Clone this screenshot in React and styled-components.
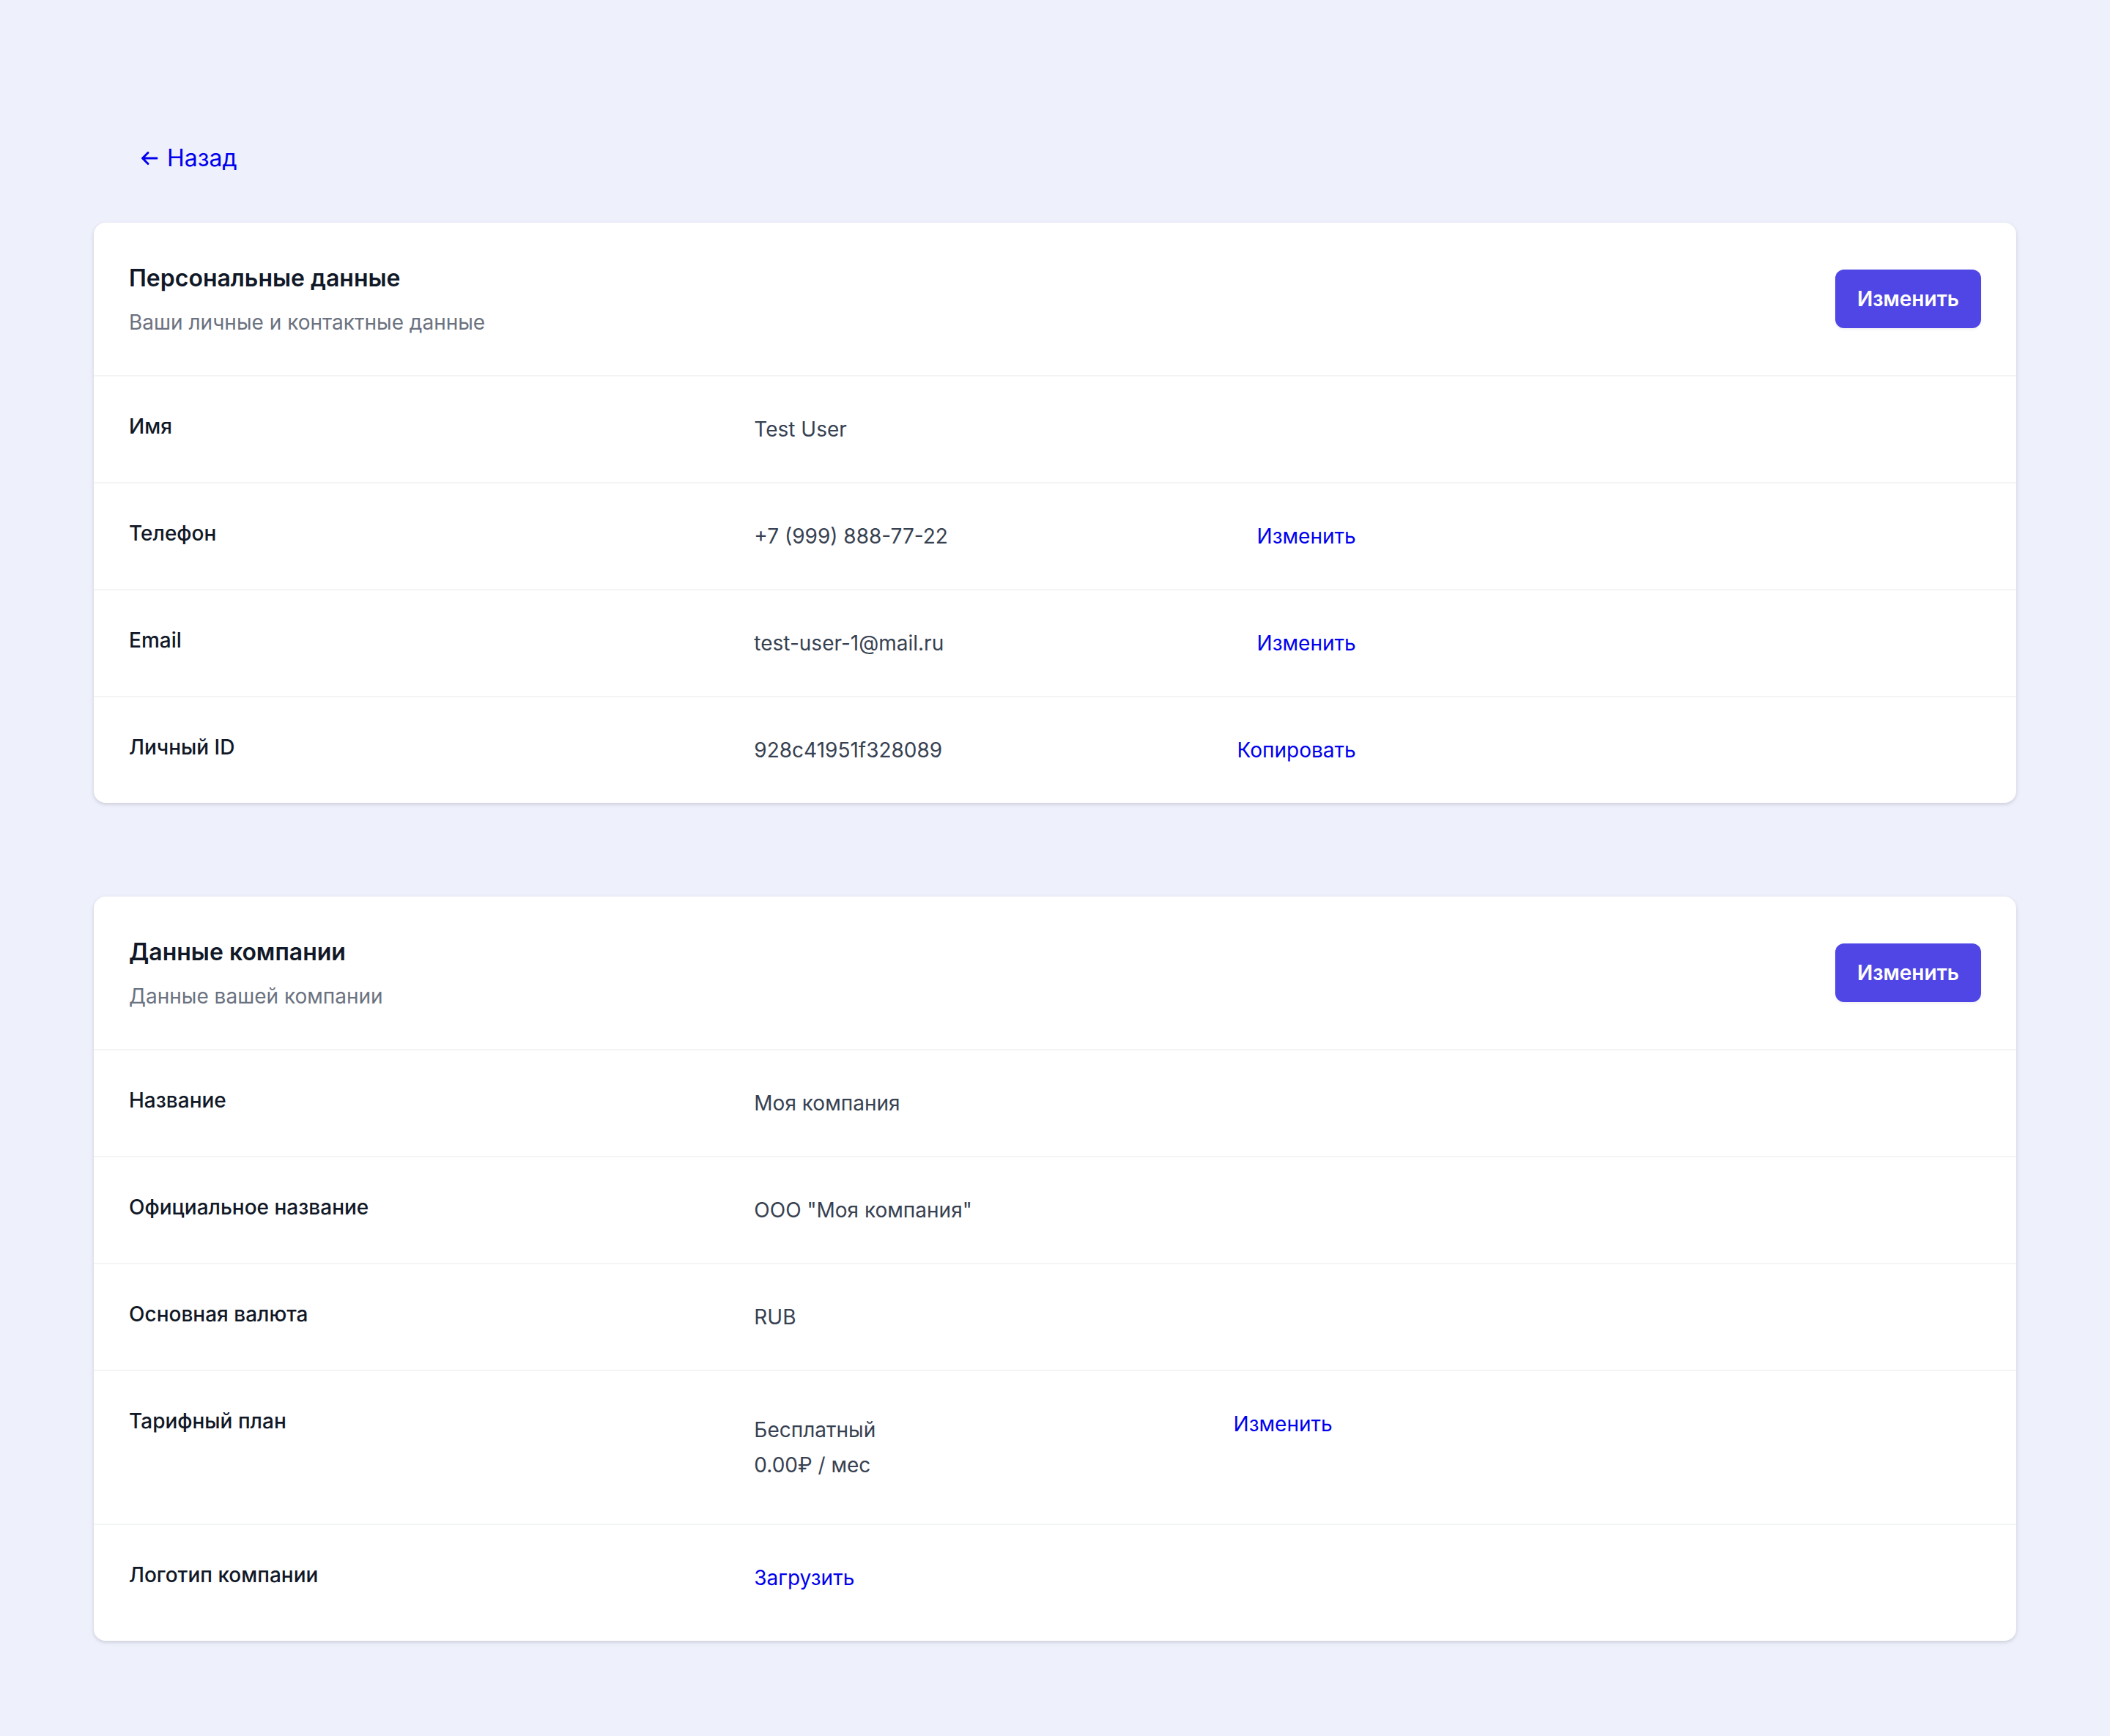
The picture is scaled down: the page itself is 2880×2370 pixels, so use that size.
import React from "react";
import styled, { createGlobalStyle } from "styled-components";

const GlobalStyle = createGlobalStyle`
  html, body {
    margin: 0;
    padding: 0;
    background: #eef0fb;
  }
  body {
    font-family: "Inter", "Liberation Sans", sans-serif;
    -webkit-font-smoothing: antialiased;
  }
  * {
    box-sizing: border-box;
  }
`;

const Page = styled.div`
  min-height: 100vh;
  padding: 192px 128px 128px;
  display: flex;
  flex-direction: column;
  gap: 128px;
  background: #eef0fb;
`;

const Top = styled.div`
  display: flex;
  flex-direction: column;
  gap: 64px;
`;

const BackLink = styled.a`
  display: inline-flex;
  align-items: center;
  gap: 12px;
  align-self: flex-start;
  margin-left: 64px;
  font-size: 32px;
  line-height: 48px;
  color: #0000ee;
  text-decoration: none;
  cursor: pointer;
`;

const Card = styled.section`
  background: #ffffff;
  border-radius: 16px;
  box-shadow: 0 2px 6px rgba(15, 23, 42, 0.1), 0 2px 4px rgba(15, 23, 42, 0.06);
  overflow: hidden;
`;

const CardHeader = styled.header`
  display: flex;
  align-items: center;
  justify-content: space-between;
  padding: 48px;
  border-bottom: 2px solid #f3f4f6;
`;

const Title = styled.h3`
  margin: 0;
  font-size: 32px;
  line-height: 56px;
  font-weight: 600;
  color: #111827;
`;

const Subtitle = styled.p`
  margin: 8px 0 0;
  font-size: 28px;
  line-height: 48px;
  color: #6b7280;
`;

const PrimaryButton = styled.button`
  border: none;
  border-radius: 12px;
  background: #4f46e5;
  color: #ffffff;
  font-family: inherit;
  font-size: 28px;
  line-height: 48px;
  font-weight: 600;
  padding: 16px 30px;
  box-shadow: 0 2px 4px rgba(0, 0, 0, 0.06);
  cursor: pointer;
`;

const Row = styled.div`
  display: grid;
  grid-template-columns: repeat(3, 1fr);
  gap: 32px;
  padding: 48px 48px ${(p) => (p.$tall ? "62px" : "48px")};
  & + & {
    border-top: 2px solid #f3f4f6;
  }
`;

const Label = styled.dt`
  margin: 0;
  font-size: 28px;
  line-height: 40px;
  font-weight: 500;
  color: #111827;
`;

const ValueCell = styled.dd`
  margin: 0;
  display: flex;
  align-items: flex-start;
  justify-content: space-between;
`;

const Value = styled.div`
  font-size: 28px;
  line-height: 48px;
  color: #374151;
  padding: ${(p) => (p.$stacked ? "8px 0" : "0")};
`;

const ActionLink = styled.a`
  font-size: 28px;
  line-height: 48px;
  color: #0000ee;
  text-decoration: none;
  cursor: pointer;
  margin-right: ${(p) => (p.$inset ? "32px" : "0")};
`;

const ArrowLeft = () => (
  <svg width="24" height="20" viewBox="0 0 24 20" fill="none">
    <path
      d="M22 10H3M10 2.5L2.5 10L10 17.5"
      stroke="#0000ee"
      strokeWidth="3"
      strokeLinecap="round"
      strokeLinejoin="round"
    />
  </svg>
);

const personal = [
  { label: "Имя", value: "Test User" },
  { label: "Телефон", value: "+7 (999) 888-77-22", action: "Изменить" },
  { label: "Email", value: "test-user-1@mail.ru", action: "Изменить" },
  { label: "Личный ID", value: "928c41951f328089", action: "Копировать" },
];

const DataCard = ({ title, subtitle, children }) => (
  <Card>
    <CardHeader>
      <div>
        <Title>{title}</Title>
        <Subtitle>{subtitle}</Subtitle>
      </div>
      <PrimaryButton>Изменить</PrimaryButton>
    </CardHeader>
    <dl style={{ margin: 0 }}>{children}</dl>
  </Card>
);

const App = () => {
  return (
    <>
      <GlobalStyle />
      <Page>
        <Top>
          <BackLink>
            <ArrowLeft />
            Назад
          </BackLink>
          <DataCard
            title="Персональные данные"
            subtitle="Ваши личные и контактные данные"
          >
            {personal.map((item) => (
              <Row key={item.label}>
                <Label>{item.label}</Label>
                <ValueCell>
                  <Value>{item.value}</Value>
                  {item.action && <ActionLink>{item.action}</ActionLink>}
                </ValueCell>
              </Row>
            ))}
          </DataCard>
        </Top>

        <DataCard title="Данные компании" subtitle="Данные вашей компании">
          <Row>
            <Label>Название</Label>
            <ValueCell>
              <Value>Моя компания</Value>
            </ValueCell>
          </Row>
          <Row>
            <Label>Официальное название</Label>
            <ValueCell>
              <Value>ООО "Моя компания"</Value>
            </ValueCell>
          </Row>
          <Row>
            <Label>Основная валюта</Label>
            <ValueCell>
              <Value>RUB</Value>
            </ValueCell>
          </Row>
          <Row>
            <Label>Тарифный план</Label>
            <ValueCell>
              <Value $stacked>
                <div>Бесплатный</div>
                <div>0.00₽ / мес</div>
              </Value>
              <ActionLink $inset>Изменить</ActionLink>
            </ValueCell>
          </Row>
          <Row $tall>
            <Label>Логотип компании</Label>
            <ValueCell>
              <ActionLink>Загрузить</ActionLink>
            </ValueCell>
          </Row>
        </DataCard>
      </Page>
    </>
  );
};

export default App;
